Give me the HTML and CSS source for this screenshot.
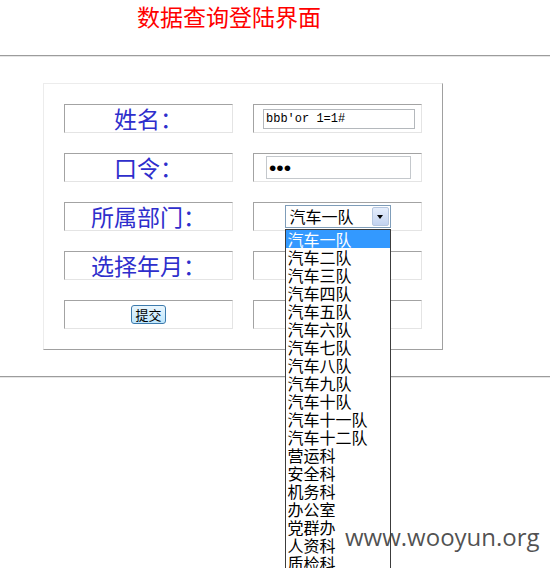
FILE: index.html
```html
<!DOCTYPE html>
<html lang="zh">
<head>
<meta charset="utf-8">
<title>数据查询登陆界面</title>
<link rel="stylesheet" href="styles.css">
</head>
<body>
<div class="header"><h1 class="title">数据查询登陆界面</h1></div>
<div class="rule"></div>
<form class="login">
<table class="form-table">
  <tr>
    <td class="label">姓名：</td>
    <td class="field"><input class="text-input" type="text" value="bbb'or 1=1#"></td>
  </tr>
  <tr>
    <td class="label">口令：</td>
    <td class="field"><input class="pass-input" type="password" value="abc"></td>
  </tr>
  <tr>
    <td class="label">所属部门：</td>
    <td class="field">
      <div class="select">
        <div class="select-box">
          <span class="select-value">汽车一队</span>
          <span class="select-btn"><span class="tri"></span></span>
        </div>
        <ul class="select-list">
          <li class="opt active">汽车一队</li>
          <li class="opt">汽车二队</li>
          <li class="opt">汽车三队</li>
          <li class="opt">汽车四队</li>
          <li class="opt">汽车五队</li>
          <li class="opt">汽车六队</li>
          <li class="opt">汽车七队</li>
          <li class="opt">汽车八队</li>
          <li class="opt">汽车九队</li>
          <li class="opt">汽车十队</li>
          <li class="opt">汽车十一队</li>
          <li class="opt">汽车十二队</li>
          <li class="opt">营运科</li>
          <li class="opt">安全科</li>
          <li class="opt">机务科</li>
          <li class="opt">办公室</li>
          <li class="opt">党群办</li>
          <li class="opt">人资科</li>
          <li class="opt">质检科</li>
        </ul>
      </div>
    </td>
  </tr>
  <tr>
    <td class="label">选择年月：</td>
    <td class="field"></td>
  </tr>
  <tr>
    <td class="label"><button class="submit" type="button">提交</button></td>
    <td class="field"></td>
  </tr>
</table>
</form>
<div class="rule rule-bottom"></div>
<div class="watermark">www.wooyun.org</div>
</body>
</html>
```

FILE: styles.css
```css
html, body {
  margin: 0;
  padding: 0;
  overflow: hidden;
  background: #fff;
}
body {
  width: 550px;
  height: 568px;
  position: relative;
  font-family: "Noto Sans CJK SC", "Noto Sans", sans-serif;
}
.header {
  height: 55px;
}
.title {
  margin: 0;
  padding-left: 137px;
  font-size: 23px;
  line-height: 32px;
  font-weight: normal;
  color: #ff0000;
}
.rule {
  height: 0;
  border-top: 1px solid #9c9c9c;
  border-bottom: 1px solid #e6e6e6;
}
.login {
  margin: 26px 0 0 43px;
}
.form-table {
  border-collapse: separate;
  border-spacing: 20px;
  border: 1px solid;
  border-color: #ececec #a0a0a0 #a0a0a0 #ececec;
  width: 400px;
}
.form-table td {
  width: 167px;
  height: 27px;
  padding: 0;
  border: 1px solid;
  border-color: #a3a3a3 #e4e4e4 #e4e4e4 #a3a3a3;
  vertical-align: middle;
  text-align: center;
}
.label {
  font-size: 23px;
  line-height: 27px;
  color: #2e2ecc;
}
.field {
  position: relative;
}
.text-input {
  display: block;
  margin: 0 0 0 9px;
  box-sizing: border-box;
  width: 152px;
  height: 20px;
  padding: 0 2px;
  border: 1px solid #b4b8bc;
  font-family: "Liberation Mono", monospace;
  font-size: 12px;
  color: #000;
  outline: none;
}
.pass-input {
  display: block;
  margin: 0 0 0 12px;
  box-sizing: border-box;
  width: 145px;
  height: 23px;
  padding: 0 2px;
  border: 1px solid #c4c8cc;
  font-family: "Liberation Sans", sans-serif;
  font-size: 21px;
  letter-spacing: 0;
  color: #000;
  outline: none;
}
.select {
  position: relative;
  width: 106px;
  margin: 0 auto;
  text-align: left;
}
.select-box {
  box-sizing: border-box;
  height: 23px;
  border: 1px solid #7f9db9;
  display: flex;
  align-items: stretch;
  background: #fff;
}
.select-value {
  flex: 1;
  padding-left: 4px;
  font-size: 16px;
  line-height: 21px;
  color: #000;
}
.select-btn {
  width: 15px;
  margin: 1px;
  border: 1px solid #b6c7e0;
  border-radius: 2px;
  background: linear-gradient(#e6eefc, #c3d3f0);
  display: flex;
  align-items: center;
  justify-content: center;
}
.tri {
  width: 0;
  height: 0;
  border-left: 3px solid transparent;
  border-right: 3px solid transparent;
  border-top: 4px solid #000;
}
.select-list {
  position: absolute;
  top: 24px;
  left: 0;
  width: 106px;
  box-sizing: border-box;
  margin: 0;
  padding: 0;
  list-style: none;
  background: #fff;
  border: 1px solid #3c3c3c;
  z-index: 2;
}
.opt {
  font-size: 16px;
  line-height: 18px;
  height: 18px;
  padding-left: 2px;
  color: #000;
  white-space: nowrap;
}
.opt.active {
  background: #3399ff;
  color: #fff;
}
.submit {
  display: block;
  box-sizing: border-box;
  width: 35px;
  height: 19px;
  padding: 0;
  margin: 0 auto;
  border: 1px solid #3d7bad;
  border-radius: 3px;
  background: linear-gradient(#eaf6fd, #bee6fd);
  font-family: "Noto Sans CJK SC", sans-serif;
  font-size: 13px;
  line-height: 16px;
  color: #000;
}
.rule-bottom {
  margin-top: 26px;
}
.watermark {
  position: absolute;
  left: 345px;
  top: 525px;
  font-family: "Open Sans", "DejaVu Sans", sans-serif;
  font-size: 24px;
  line-height: 24px;
  color: rgba(58, 58, 58, 0.88);
  z-index: 3;
}
```
